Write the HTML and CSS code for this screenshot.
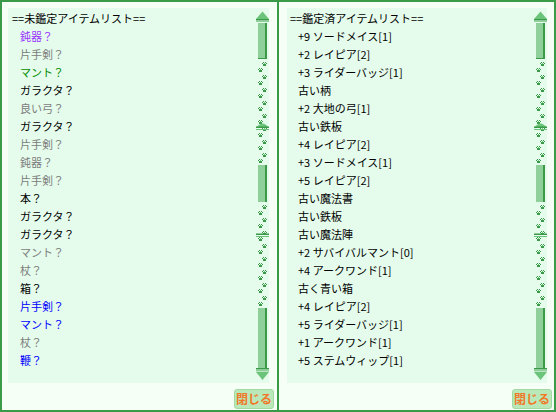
FILE: index.html
```html
<!DOCTYPE html>
<html lang="ja">
<head>
<meta charset="utf-8">
<title>アイテムリスト</title>
<link rel="stylesheet" href="styles.css">
</head>
<body>
<div class="window">
  <section class="panel panel-left">
    <div class="list">
      <ul class="items">
        <li class="head">==未鑑定アイテムリスト==</li>
        <li class="item purple">鈍器？</li>
        <li class="item gray">片手剣？</li>
        <li class="item green">マント？</li>
        <li class="item">ガラクタ？</li>
        <li class="item gray">良い弓？</li>
        <li class="item">ガラクタ？</li>
        <li class="item gray">片手剣？</li>
        <li class="item gray">鈍器？</li>
        <li class="item gray">片手剣？</li>
        <li class="item">本？</li>
        <li class="item">ガラクタ？</li>
        <li class="item">ガラクタ？</li>
        <li class="item gray">マント？</li>
        <li class="item gray">杖？</li>
        <li class="item">箱？</li>
        <li class="item blue">片手剣？</li>
        <li class="item blue">マント？</li>
        <li class="item gray">杖？</li>
        <li class="item blue">鞭？</li>
      </ul>
      <svg class="scrollbar" width="13" height="375" viewBox="0 0 13 375">
        <defs>
          <pattern id="paw-l" patternUnits="userSpaceOnUse" x="0" y="54" width="14" height="13">
            <g fill="#3a9a48">
              <rect x="7" y="0" width="1" height="1"/><rect x="9" y="0" width="1" height="1"/>
              <rect x="6" y="1" width="1" height="1"/><rect x="10" y="1" width="1" height="1"/>
              <rect x="7" y="2" width="3" height="2"/>
              <rect x="3" y="6" width="1" height="1"/><rect x="5" y="6" width="1" height="1"/>
              <rect x="2" y="7" width="1" height="1"/><rect x="6" y="7" width="1" height="1"/>
              <rect x="3" y="8" width="3" height="2"/>
            </g>
            <g fill="#6cc47a">
              <rect x="8" y="1" width="1" height="1"/>
              <rect x="4" y="7" width="1" height="1"/>
            </g>
          </pattern>
        </defs>
        <rect x="0" y="51" width="13" height="249" fill="url(#paw-l)"/>
        <polygon points="6.5,3.5 0,11 13,11" fill="#6cc47a"/>
        <rect x="0" y="11" width="13" height="1.5" fill="#3a9a48"/>
        <rect x="0" y="13" width="13" height="1" fill="#8fd09a"/>
        <rect x="2" y="15" width="9" height="36" fill="#8fd09a"/>
        <rect x="9" y="15" width="2" height="36" fill="#3a9a48"/>
        <rect x="2" y="50" width="9" height="1" fill="#3a9a48"/>
        <path d="M0,120 Q6.5,111 13,120 Z" fill="#6cc47a"/>
        <rect x="0" y="118.5" width="13" height="1.5" fill="#3a9a48"/>
        <rect x="0" y="121" width="13" height="1" fill="#6cc47a"/>
        <rect x="2" y="157" width="9" height="37" fill="#8fd09a"/>
        <rect x="9" y="157" width="2" height="37" fill="#3a9a48"/>
        <rect x="0" y="225.5" width="13" height="1.5" fill="#3a9a48"/>
        <rect x="0" y="228" width="13" height="1" fill="#6cc47a"/>
        <rect x="2" y="300" width="9" height="60" fill="#8fd09a"/>
        <rect x="9" y="300" width="2" height="60" fill="#3a9a48"/>
        <rect x="0" y="360" width="13" height="1.5" fill="#3a9a48"/>
        <rect x="0" y="362" width="13" height="1.5" fill="#8fd09a"/>
        <polygon points="0,364 13,364 6.5,372" fill="#6cc47a"/>
      </svg>
    </div>
    <div class="footer"><button class="close" type="button">閉じる</button></div>
  </section>
  <div class="divider"></div>
  <section class="panel panel-right">
    <div class="list">
      <ul class="items">
        <li class="head">==鑑定済アイテムリスト==</li>
        <li class="item">+9 ソードメイス[1]</li>
        <li class="item">+2 レイピア[2]</li>
        <li class="item">+3 ライダーバッジ[1]</li>
        <li class="item">古い柄</li>
        <li class="item">+2 大地の弓[1]</li>
        <li class="item">古い鉄板</li>
        <li class="item">+4 レイピア[2]</li>
        <li class="item">+3 ソードメイス[1]</li>
        <li class="item">+5 レイピア[2]</li>
        <li class="item">古い魔法書</li>
        <li class="item">古い鉄板</li>
        <li class="item">古い魔法陣</li>
        <li class="item">+2 サバイバルマント[0]</li>
        <li class="item">+4 アークワンド[1]</li>
        <li class="item">古く青い箱</li>
        <li class="item">+4 レイピア[2]</li>
        <li class="item">+5 ライダーバッジ[1]</li>
        <li class="item">+1 アークワンド[1]</li>
        <li class="item">+5 ステムウィップ[1]</li>
      </ul>
      <svg class="scrollbar" width="13" height="375" viewBox="0 0 13 375">
        <defs>
          <pattern id="paw-r" patternUnits="userSpaceOnUse" x="0" y="54" width="14" height="13">
            <g fill="#3a9a48">
              <rect x="7" y="0" width="1" height="1"/><rect x="9" y="0" width="1" height="1"/>
              <rect x="6" y="1" width="1" height="1"/><rect x="10" y="1" width="1" height="1"/>
              <rect x="7" y="2" width="3" height="2"/>
              <rect x="3" y="6" width="1" height="1"/><rect x="5" y="6" width="1" height="1"/>
              <rect x="2" y="7" width="1" height="1"/><rect x="6" y="7" width="1" height="1"/>
              <rect x="3" y="8" width="3" height="2"/>
            </g>
            <g fill="#6cc47a">
              <rect x="8" y="1" width="1" height="1"/>
              <rect x="4" y="7" width="1" height="1"/>
            </g>
          </pattern>
        </defs>
        <rect x="0" y="51" width="13" height="249" fill="url(#paw-r)"/>
        <polygon points="6.5,3.5 0,11 13,11" fill="#6cc47a"/>
        <rect x="0" y="11" width="13" height="1.5" fill="#3a9a48"/>
        <rect x="0" y="13" width="13" height="1" fill="#8fd09a"/>
        <rect x="2" y="15" width="9" height="36" fill="#8fd09a"/>
        <rect x="9" y="15" width="2" height="36" fill="#3a9a48"/>
        <rect x="2" y="50" width="9" height="1" fill="#3a9a48"/>
        <path d="M0,120 Q6.5,111 13,120 Z" fill="#6cc47a"/>
        <rect x="0" y="118.5" width="13" height="1.5" fill="#3a9a48"/>
        <rect x="0" y="121" width="13" height="1" fill="#6cc47a"/>
        <rect x="2" y="157" width="9" height="37" fill="#8fd09a"/>
        <rect x="9" y="157" width="2" height="37" fill="#3a9a48"/>
        <rect x="0" y="225.5" width="13" height="1.5" fill="#3a9a48"/>
        <rect x="0" y="228" width="13" height="1" fill="#6cc47a"/>
        <rect x="2" y="300" width="9" height="60" fill="#8fd09a"/>
        <rect x="9" y="300" width="2" height="60" fill="#3a9a48"/>
        <rect x="0" y="360" width="13" height="1.5" fill="#3a9a48"/>
        <rect x="0" y="362" width="13" height="1.5" fill="#8fd09a"/>
        <polygon points="0,364 13,364 6.5,372" fill="#6cc47a"/>
      </svg>
    </div>
    <div class="footer"><button class="close" type="button">閉じる</button></div>
  </section>
</div>
</body>
</html>
```

FILE: styles.css
```css
html, body {
  margin: 0;
  padding: 0;
}

body {
  width: 556px;
  height: 412px;
  overflow: hidden;
  background: #f5fff5;
  font-family: "Noto Sans CJK JP", "Noto Sans", sans-serif;
  font-size: 11px;
  color: #000;
}

.window {
  box-sizing: border-box;
  width: 556px;
  height: 412px;
  border: 2px solid #3a9a48;
  background: #f5fff5;
  display: flex;
}

.panel {
  width: 275px;
  display: flex;
  flex-direction: column;
  box-sizing: border-box;
  padding-top: 6px;
}

.panel-left {
  padding-left: 6px;
  padding-right: 3px;
}

.panel-right {
  padding-left: 8px;
  padding-right: 2px;
}

.divider {
  width: 2px;
  background: #3a9a48;
}

.list {
  height: 375px;
  margin-right: 5px;
  background: #e5fcec;
  display: flex;
}

.items {
  flex: 1;
  list-style: none;
  margin: 0;
  padding: 1px 0 0 0;
}

.items li {
  height: 18px;
  line-height: 18px;
  white-space: nowrap;
}

.head {
  padding-left: 4px;
}

.item {
  padding-left: 12px;
}

.panel-right .head {
  padding-left: 3px;
}

.panel-right .item {
  padding-left: 11px;
}

.gray { color: #7c7c7c; }
.purple { color: #9933ff; }
.green { color: #008c00; }
.blue { color: #0000ff; }

.scrollbar {
  display: block;
  flex: none;
}

.footer {
  display: flex;
  justify-content: flex-end;
  padding-top: 6px;
}

.close {
  width: 40px;
  height: 20px;
  padding: 0;
  margin: 0;
  border: 1px solid #a3d9a3;
  border-radius: 3px;
  background: #b9e8b9;
  color: #f07828;
  font-family: "Noto Sans CJK JP", sans-serif;
  font-size: 12px;
  font-weight: bold;
  line-height: 18px;
}
```
